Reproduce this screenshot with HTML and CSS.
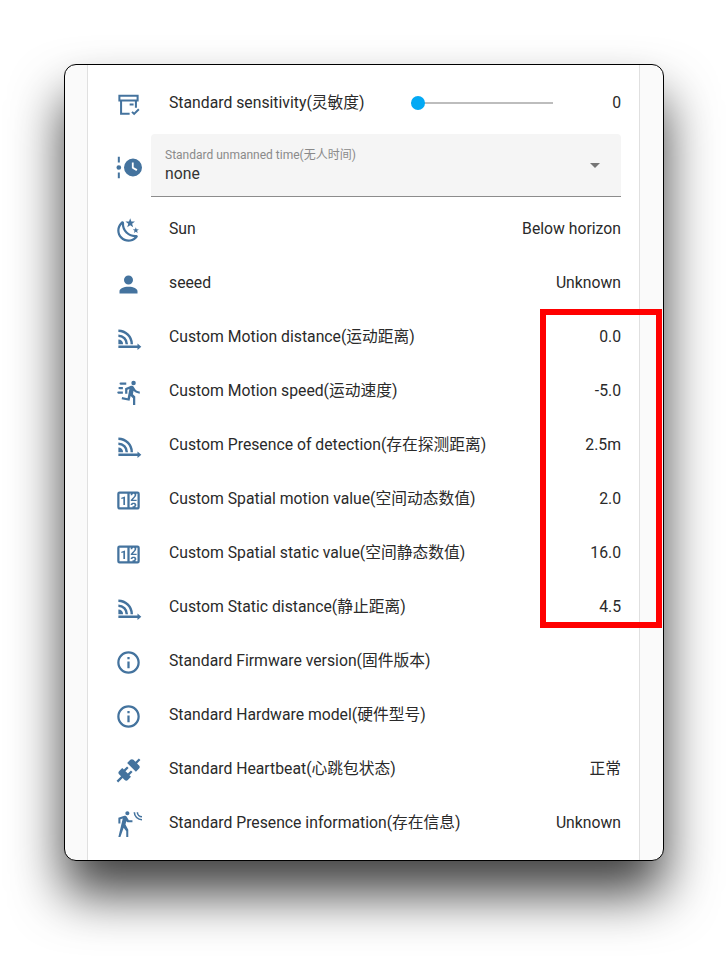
FILE: index.html
```html
<!DOCTYPE html>
<html lang="en">
<head>
<meta charset="utf-8">
<title>Seeed sensor card</title>
<link rel="stylesheet" href="styles.css">
</head>
<body>
<svg class="defs" width="0" height="0" aria-hidden="true">
  <symbol id="i-dist" viewBox="0 0 24 24"><path d="M3 4V6.2A10.8 10.8 0 0 1 13.8 17H16A13 13 0 0 0 3 4ZM3 8.4V10.6A6.4 6.4 0 0 1 9.4 17H11.6A8.6 8.6 0 0 0 3 8.4ZM3 12.8V17H7.2A4.2 4.2 0 0 0 3 12.8ZM3 18.3H20V16.5L23.4 19.4L20 22.3V20.5H3Z"/></symbol>
  <symbol id="i-counter" viewBox="0 0 24 24"><path d="M4,4H20A2,2 0 0,1 22,6V18A2,2 0 0,1 20,20H4A2,2 0 0,1 2,18V6A2,2 0 0,1 4,4M4,6V18H11V6H4M20,18V6H18.76C19,6.54 18.95,7.07 18.95,7.13C18.88,7.8 18.41,8.5 18.24,8.75L15.91,11.3L19.23,11.28L19.24,12.5L14.04,12.47L14,11.47C14,11.47 17.05,8.24 17.2,7.95C17.34,7.67 17.91,6 16.5,6C15.27,6.05 15.41,7.3 15.41,7.3L13.87,7.31C13.87,7.31 13.88,6.65 14.25,6H13V18H15.58L15.57,17.14L16.54,17.13C16.54,17.13 17.45,16.97 17.46,16.08C17.5,15.08 16.65,15.08 16.5,15.08C16.37,15.08 15.43,15.13 15.43,15.95H13.91C13.91,15.95 13.95,13.89 16.5,13.89C19.1,13.89 18.96,15.91 18.96,15.91C18.96,15.91 19,17.16 17.85,17.63L18.37,18H20M8.92,16H7.42V10.2L5.62,10.76V9.53L8.76,8.41H8.92V16Z"/></symbol>
  <symbol id="i-info" viewBox="0 0 24 24"><path d="M11,9H13V7H11M12,20C7.59,20 4,16.41 4,12C4,7.59 7.59,4 12,4C16.41,4 20,7.59 20,12C20,16.41 16.41,20 12,20M12,2A10,10 0 0,0 2,12A10,10 0 0,0 12,22A10,10 0 0,0 22,12A10,10 0 0,0 12,2M11,17H13V11H11V17Z"/></symbol>
</svg>

<main class="window">
  <div class="column">
    <div class="row slider-row">
      <svg class="icon" viewBox="0 0 24 24"><path d="M3 2.5H21V8.5H19.5V14H17.7V8.5H6.3V18.5H13V20.3H4.5V8.5H3V2.5ZM4.8 4.3V6.7H19.2V4.3H4.8ZM13 10.3H16.5V12.1H13V10.3ZM14.5 18.2L15.7 17L17 18.3L20.6 14.7L21.8 15.9L17 20.7L14.5 18.2Z"/></svg>
      <span class="label">Standard sensitivity(灵敏度)</span>
      <div class="slider"><span class="thumb"></span><span class="track"></span></div>
      <span class="value slider-value">0</span>
    </div>

    <div class="select-row">
      <svg class="icon" viewBox="0 0 24 24"><path d="M2.5 2.4H4.3V7.5H2.5ZM3.4 9.9A2.1 2.1 0 1 1 3.4 14.1A2.1 2.1 0 0 1 3.4 9.9ZM2.5 16.5H4.3V21.6H2.5ZM16 4A8 8 0 1 1 16 20A8 8 0 0 1 16 4ZM15 7.5V12.6L19 15L19.9 13.6L16.6 11.7V7.5H15Z"/></svg>
      <div class="select">
        <div class="select-text">
          <span class="select-label">Standard unmanned time(无人时间)</span>
          <span class="select-value">none</span>
        </div>
        <span class="caret"></span>
      </div>
    </div>

    <div class="row">
      <svg class="icon" viewBox="0 0 24 24"><path d="M17.75,4.09L15.22,6.03L16.13,9.09L13.5,7.28L10.87,9.09L11.78,6.03L9.25,4.09L12.44,4L13.5,1L14.56,4L17.75,4.09M21.25,11L19.61,12.25L20.2,14.23L18.5,13.06L16.8,14.23L17.39,12.25L15.75,11L17.81,10.95L18.5,9L19.19,10.95L21.25,11M18.97,15.95C19.8,15.87 20.69,17.05 20.16,17.8C19.84,18.25 19.5,18.67 19.08,19.07C15.17,23 8.84,23 4.94,19.07C1.03,15.17 1.03,8.83 4.94,4.93C5.34,4.53 5.76,4.17 6.21,3.85C6.96,3.32 8.14,4.21 8.06,5.04C7.79,7.9 8.75,10.87 10.95,13.06C13.14,15.26 16.1,16.22 18.97,15.95M17.33,17.97C14.5,17.81 11.7,16.64 9.53,14.5C7.36,12.31 6.2,9.5 6.04,6.68C3.23,9.82 3.34,14.64 6.35,17.66C9.37,20.67 14.19,20.78 17.33,17.97Z"/></svg>
      <span class="label">Sun</span>
      <span class="value">Below horizon</span>
    </div>
    <div class="row">
      <svg class="icon" viewBox="0 0 24 24"><path d="M12,4A4,4 0 0,1 16,8A4,4 0 0,1 12,12A4,4 0 0,1 8,8A4,4 0 0,1 12,4M12,14C16.42,14 20,15.79 20,18V20H4V18C4,15.79 7.58,14 12,14Z"/></svg>
      <span class="label">seeed</span>
      <span class="value">Unknown</span>
    </div>
    <div class="row">
      <svg class="icon"><use href="#i-dist"/></svg>
      <span class="label">Custom Motion distance(运动距离)</span>
      <span class="value">0.0</span>
    </div>
    <div class="row">
      <svg class="icon" viewBox="0 0 24 24"><path d="M16.5,5.5A2,2 0 0,0 18.5,3.5A2,2 0 0,0 16.5,1.5A2,2 0 0,0 14.5,3.5A2,2 0 0,0 16.5,5.5M12.9,19.4L13.9,15L16,17V23H18V15.5L15.9,13.5L16.5,10.5C17.89,12.09 19.89,13 22,13V11C20.24,11.03 18.6,10.11 17.7,8.6L16.7,7C16.34,6.4 15.7,6 15,6C14.7,6 14.5,6.1 14.2,6.1L9,8.3V13H11V9.6L12.8,8.9L11.2,17L6.3,16L5.9,18L12.9,19.4M4,9A1,1 0 0,1 3,8A1,1 0 0,1 4,7H7V9H4M5,5A1,1 0 0,1 4,4A1,1 0 0,1 5,3H10V5H5M3,13A1,1 0 0,1 2,12A1,1 0 0,1 3,11H7V13H3Z"/></svg>
      <span class="label">Custom Motion speed(运动速度)</span>
      <span class="value">-5.0</span>
    </div>
    <div class="row">
      <svg class="icon"><use href="#i-dist"/></svg>
      <span class="label">Custom Presence of detection(存在探测距离)</span>
      <span class="value">2.5m</span>
    </div>
    <div class="row">
      <svg class="icon"><use href="#i-counter"/></svg>
      <span class="label">Custom Spatial motion value(空间动态数值)</span>
      <span class="value">2.0</span>
    </div>
    <div class="row">
      <svg class="icon"><use href="#i-counter"/></svg>
      <span class="label">Custom Spatial static value(空间静态数值)</span>
      <span class="value">16.0</span>
    </div>
    <div class="row">
      <svg class="icon"><use href="#i-dist"/></svg>
      <span class="label">Custom Static distance(静止距离)</span>
      <span class="value">4.5</span>
    </div>
    <div class="row">
      <svg class="icon"><use href="#i-info"/></svg>
      <span class="label">Standard Firmware version(固件版本)</span>
    </div>
    <div class="row">
      <svg class="icon"><use href="#i-info"/></svg>
      <span class="label">Standard Hardware model(硬件型号)</span>
    </div>
    <div class="row">
      <svg class="icon" viewBox="0 0 24 24"><path d="M21.4 7.5C22.2 8.3 22.2 9.6 21.4 10.3L18.6 13.1L10.8 5.3L13.6 2.5C14.4 1.7 15.7 1.7 16.4 2.5L18.2 4.3L21.2 1.3L22.6 2.7L19.6 5.7L21.4 7.5M15.6 13.3L14.2 11.9L11.4 14.7L9.3 12.6L12.1 9.8L10.7 8.4L7.9 11.2L6.4 9.8L3.6 12.6C2.8 13.4 2.8 14.7 3.6 15.4L5.4 17.2L1.4 21.2L2.8 22.6L6.8 18.6L8.6 20.4C9.4 21.2 10.7 21.2 11.4 20.4L14.2 17.6L12.8 16.2L15.6 13.3Z"/></svg>
      <span class="label">Standard Heartbeat(心跳包状态)</span>
      <span class="value">正常</span>
    </div>
    <div class="row">
      <svg class="icon" viewBox="0 0 24 24"><path d="M11.1 10H15.5V8.2H12.3L10.4 5.1C10.1 4.6 9.5 4.2 8.9 4.2C8.7 4.2 8.6 4.3 8.4 4.3L3 6V11H4.8V7.3L6.9 6.7L3 23H4.8L7.7 14.9L10 18V23H11.8V16.6L9.3 12.1L10 9.2ZM11 3.8C12 3.8 12.8 3 12.8 2C12.8 1 12 .2 11 .2C10 .2 9.2 1 9.2 2C9.2 3 10 3.8 11 3.8ZM16.5 1A7.5 7.5 0 0 0 24 8.5V7.1A6.1 6.1 0 0 1 17.9 1H16.5ZM19.2 1A4.8 4.8 0 0 0 24 5.8V4.4A3.4 3.4 0 0 1 20.6 1H19.2Z"/></svg>
      <span class="label">Standard Presence information(存在信息)</span>
      <span class="value">Unknown</span>
    </div>
  </div>
  <div class="highlight"></div>
</main>
</body>
</html>
```

FILE: styles.css
```css
* { box-sizing: border-box; }

html, body {
  margin: 0;
  height: 100%;
  background: #fff;
}

body {
  padding: 64px 64px 0;
  overflow: hidden;
  font-family: Roboto, "Noto Sans CJK SC", sans-serif;
  color: #2a2a2a;
}

.defs { position: absolute; }

.window {
  position: relative;
  width: 600px;
  height: 797px;
  padding: 0 22px;
  background: #fafafa;
  border: 1px solid #000;
  border-radius: 12px;
  box-shadow: 0 33px 52px rgba(0, 0, 0, 0.75);
  overflow: hidden;
}

.column {
  width: 553px;
  height: 100%;
  padding: 11px 18px 0 28px;
  background: #fff;
  border-left: 1px solid #e0e0e0;
  border-right: 1px solid #e0e0e0;
  display: flex;
  flex-direction: column;
}

.row {
  display: flex;
  align-items: center;
  height: 54px;
  flex: none;
}

.select-row {
  display: flex;
  align-items: center;
  height: 63px;
  margin: 4px 0;
  flex: none;
}

.icon {
  width: 27px;
  height: 27px;
  margin: 4px 0 0 -1.5px;
  flex: none;
  fill: #44739e;
}

.label {
  margin-left: 27.5px;
  padding-top: 2px;
  flex: 1;
  font-size: 15.75px;
  line-height: 24px;
  white-space: nowrap;
}

.value {
  padding-top: 2px;
  font-size: 15.75px;
  line-height: 24px;
  white-space: nowrap;
  text-align: right;
}

.slider-row .label,
.slider-row .value { padding-top: 0; }

.slider-value { width: 68px; }

.slider {
  position: relative;
  display: flex;
  align-items: center;
  width: 142px;
  flex: none;
}

.track {
  display: block;
  width: 100%;
  height: 2px;
  background: #bdbdbd;
}

.thumb {
  position: absolute;
  left: 0;
  top: -6px;
  width: 14px;
  height: 14px;
  border-radius: 50%;
  background: #03a9f4;
}

.select {
  display: flex;
  align-items: center;
  justify-content: space-between;
  width: 470px;
  height: 63px;
  margin-left: 9.5px;
  padding: 0 21px 0 14px;
  background: #f5f5f5;
  border-bottom: 1px solid #8c8c8c;
  border-radius: 4px 4px 0 0;
}

.select-text {
  display: flex;
  flex-direction: column;
  gap: 3px;
}

.select-label {
  font-size: 12px;
  line-height: 14px;
  color: #8a8a8a;
}

.select-value {
  font-size: 15.75px;
  line-height: 18px;
  color: #333;
}

.caret {
  width: 0;
  height: 0;
  border-left: 5.5px solid transparent;
  border-right: 5.5px solid transparent;
  border-top: 5.5px solid #757575;
}

.highlight {
  position: absolute;
  left: 475px;
  top: 244px;
  width: 122px;
  height: 319px;
  border: 6px solid #f00;
}
```
